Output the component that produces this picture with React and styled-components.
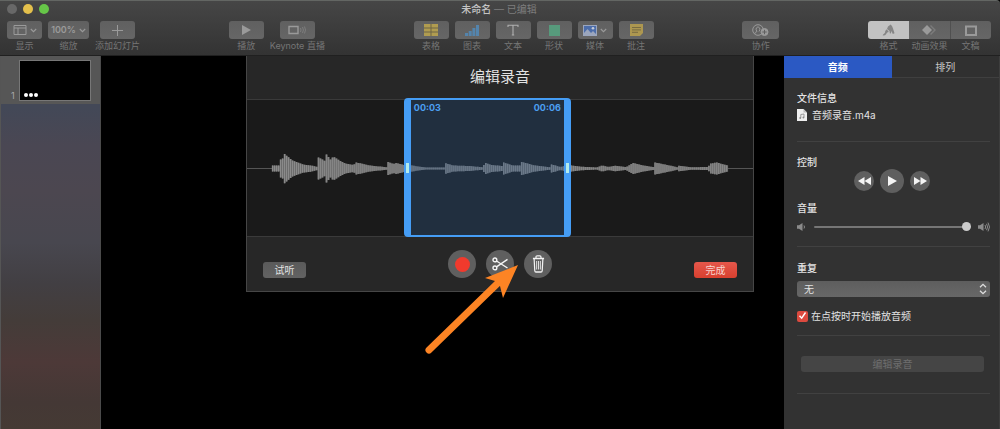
import React from "react";
import styled, { createGlobalStyle } from "styled-components";

const GlobalStyle = createGlobalStyle`
  * { box-sizing: border-box; }
  body {
    margin: 0;
    background: #000;
    color: #e2e2e2;
    font-family: Inter, "Noto Sans CJK SC", sans-serif;
    font-size: 10px;
    line-height: 14px;
  }
  button, select, input { font: inherit; color: inherit; margin: 0; }
  button { border: 0; padding: 0; background: none; }
`;

const Window = styled.div`
  position: relative;
  display: flex;
  flex-direction: column;
  min-height: 100vh;
  overflow: hidden;
`;

/* Title bar and toolbar */
const Header = styled.header`
  height: 56px;
  padding: 0 9px 0 7px;
  background: linear-gradient(#464646, #333);
  border-top: 1px solid #636663;
  border-bottom: 1px solid #202020;
  border-radius: 0 4px 0 0;
`;
const TitleBar = styled.div`
  display: grid;
  grid-template-columns: 1fr auto 1fr;
  align-items: center;
  height: 16px;
  margin-bottom: 4px;
`;
const Lights = styled.div`
  display: flex;
  gap: 6px;
`;
const Light = styled.button`
  width: 10px;
  height: 10px;
  border-radius: 50%;
  background: ${(p) => p.$color};
`;
const Title = styled.h1`
  margin: 0;
  font-size: 10px;
  font-weight: 400;
  color: #7e7e7e;
  b { font-weight: 500; color: #c4c4c4; }
`;
const Toolbar = styled.nav`
  display: flex;
  justify-content: space-between;
`;
const Group = styled.div`
  display: flex;
  gap: ${(p) => p.$gap ?? 6}px;
`;
const Tool = styled.button`
  display: flex;
  flex-direction: column;
  align-items: center;
  font-size: 9px;
  color: #757575;
  white-space: nowrap;
`;
const Face = styled.span`
  display: flex;
  align-items: center;
  justify-content: center;
  gap: 3px;
  width: ${(p) => p.$width ?? 35}px;
  height: 18px;
  border-radius: ${(p) => p.$radius ?? "3px"};
  background: ${(p) => (p.$active ? "#c2c2c2" : "linear-gradient(#606060, #666)")};
  border-left: ${(p) => (p.$split ? "1px solid #505050" : "0")};
  color: #9a9a9a;
  font-weight: 600;
`;

/* Body columns */
const Body = styled.div`
  flex: 1;
  display: flex;
`;
const Sidebar = styled.aside`
  width: 101px;
  border-left: 1px solid #555;
  border-right: 1px solid #4a4a4a;
  background: linear-gradient(
    #434857 14%, #4a4753 24%, #4c4750 36%, #48474f 50%,
    #423f43 61%, #443c39 71%, #4d3938 82%, #443835 93%, #453a34 100%
  );
`;
const SlideRow = styled.div`
  display: flex;
  align-items: flex-end;
  gap: 4px;
  height: 48px;
  padding: 4px 9px 3px 10px;
  background: #565656;
  font-size: 9px;
  line-height: 10px;
  color: #aaa;
`;
const Slide = styled.div`
  flex: 1;
  display: flex;
  align-items: flex-end;
  gap: 1px;
  height: 41px;
  padding: 3px 4px;
  background: #000;
  border: 1px solid #777;
`;
const Dot = styled.span`
  width: 4px;
  height: 4px;
  border-radius: 50%;
  background: #fff;
`;
const Canvas = styled.main`
  flex: 1;
  background: #000;
`;

/* Recording sheet, hanging from the toolbar over the canvas */
const Sheet = styled.section`
  position: absolute;
  top: 56px;
  left: 50%;
  transform: translateX(-50%);
  width: 50.8%;
  min-width: 480px;
  background: #272727;
  border: 1px solid #464646;
  border-top: 0;
`;
const SheetTitle = styled.h2`
  margin: 0;
  padding: 10px 0 11px;
  text-align: center;
  font-size: 15px;
  line-height: 22px;
  font-weight: 400;
`;
const Track = styled.div`
  position: relative;
  height: 138px;
  background: #1a1a1a;
  border: solid #3a3a3a;
  border-width: 1px 0;
`;
const WaveSvg = styled.svg`
  display: block;
  width: 100%;
  height: 136px;
`;
const Selection = styled.div`
  position: absolute;
  inset: -2px 36% -1px 31%;
  display: flex;
  justify-content: space-between;
  padding: 1px 3px;
  border: solid #459df5;
  border-width: 2px 7px;
  border-radius: 4px;
  background: rgba(48, 88, 136, 0.34);
  color: #4c9ff2;
  font-size: 9px;
  font-weight: 700;
  &::before, &::after {
    content: "";
    position: absolute;
    top: 63px;
    width: 3px;
    height: 10px;
    background: #b4ecec;
  }
  &::before { left: -5px; }
  &::after { right: -5px; }
`;
const SheetFooter = styled.footer`
  display: grid;
  grid-template-columns: 1fr auto 1fr;
  align-items: start;
  height: 54px;
  padding: 13px 16px 0;
`;
const PushButton = styled.button`
  justify-self: ${(p) => (p.$primary ? "end" : "start")};
  width: 43px;
  height: 16px;
  margin-top: 12px;
  border-radius: 3px;
  background: ${(p) => (p.$primary ? "linear-gradient(#e5574b, #d8402f)" : "linear-gradient(#5a5a5a, #626262)")};
  color: ${(p) => (p.$primary ? "#f7d5d0" : "#e2e2e2")};
`;
const RoundRow = styled.div`
  display: flex;
  align-items: center;
  justify-content: center;
  gap: ${(p) => p.$gap}px;
`;
const Transport = styled(RoundRow)`
  padding-right: 3px;
`;
const Round = styled.button`
  display: flex;
  align-items: center;
  justify-content: center;
  width: ${(p) => p.$size}px;
  height: ${(p) => p.$size}px;
  border-radius: 50%;
  background: #5f5f5f;
  color: #f4f4f4;
`;
const Pointer = styled.svg`
  position: absolute;
  top: 204px;
  left: 50%;
  margin-left: -80px;
  pointer-events: none;
`;

/* Inspector */
const Inspector = styled.aside`
  width: 216px;
  background: #323232;
  border-right: 1px solid #3d3d3d;
`;
const Tabs = styled.div`
  display: grid;
  grid-template-columns: 1fr 1fr;
`;
const Tab = styled.button`
  height: 22px;
  background: ${(p) => (p.$active ? "#2b59c3" : "#303030")};
  border-bottom: 1px solid ${(p) => (p.$active ? "#2b59c3" : "#3f3f3f")};
  font-weight: ${(p) => (p.$active ? 600 : 400)};
  color: ${(p) => (p.$active ? "#fff" : "#c8c8c8")};
`;
const Section = styled.section`
  display: flex;
  flex-direction: column;
  height: ${(p) => p.$height}px;
  margin: 0 9px 0 13px;
  padding-top: ${(p) => p.$top ?? 13}px;
  border-bottom: 1px solid #414141;
`;
const Heading = styled.h3`
  margin: 0;
  font-size: 10px;
  font-weight: 500;
`;
const Line = styled.div`
  display: flex;
  align-items: center;
  gap: 5px;
  margin-top: 3px;
`;
const FieldLabel = styled.label`
  font-weight: 500;
`;
const VolumeRow = styled.div`
  display: flex;
  align-items: center;
  gap: 7px;
  margin-top: 5px;
`;
const VolumeLabel = styled(FieldLabel)`
  margin-top: 8px;
`;
const Range = styled.input`
  appearance: none;
  flex: 1;
  min-width: 0;
  height: 14px;
  background: transparent;
  &::-webkit-slider-runnable-track {
    height: 2px;
    border-radius: 1px;
    background: #767676;
  }
  &::-webkit-slider-thumb {
    appearance: none;
    width: 9px;
    height: 9px;
    margin-top: -4px;
    border-radius: 50%;
    background: #cbcbcb;
  }
`;
const SelectBox = styled.div`
  position: relative;
  margin-top: 6px;
  svg { position: absolute; right: 3px; top: 2px; pointer-events: none; }
`;
const Select = styled.select`
  appearance: none;
  display: block;
  width: 100%;
  height: 16px;
  padding: 0 7px;
  border: 0;
  border-radius: 3px;
  background: linear-gradient(#5e5e5e, #676767);
`;
const CheckLabel = styled.label`
  position: relative;
  display: flex;
  align-items: center;
  gap: 3px;
  margin-top: 12px;
  svg { position: absolute; left: 0; top: 1px; pointer-events: none; }
`;
const Check = styled.input`
  appearance: none;
  width: 11px;
  height: 11px;
  border-radius: 2px;
  background: #dc4a3f;
`;
const WideButton = styled.button`
  height: 16px;
  margin: 0 6px 0 4px;
  border-radius: 3px;
  background: #454545;
  color: #6e6e6e;
`;

/* Icons */
const Chevron = () => (
  <svg width="7" height="5" viewBox="0 0 7 5" fill="none" stroke="currentColor" strokeWidth="1.1"><path d="M.8 1 3.5 3.7 6.2 1" /></svg>
);
const ViewIcon = () => (
  <svg width="14" height="12" viewBox="0 0 14 12" fill="none" stroke="currentColor"><path d="M1 1.5h12v9H1zM1 4h12M5 4v6.5" /></svg>
);
const PlusIcon = () => (
  <svg width="11" height="11" viewBox="0 0 11 11" stroke="currentColor"><path d="M5.5 0v11M0 5.5h11" /></svg>
);
const PlayIcon = () => (
  <svg width="10" height="10" viewBox="0 0 10 10" fill="currentColor"><path d="M1 0v10l9-5z" /></svg>
);
const LiveIcon = () => (
  <svg width="18" height="10" viewBox="0 0 18 10" fill="none" stroke="currentColor"><path d="M1 1.5h9v7H1z" strokeWidth="1.4" /><path d="M12.5 3q1 2 0 4M14.5 2q1.8 3 0 6M16.500 1.500q2 3.500 0 7" strokeWidth=".8" opacity=".6" /></svg>
);
const TableIcon = () => (
  <svg width="14" height="12" viewBox="0 0 14 12"><path fill="#b09c50" d="M0 0h14v12H0z" /><path stroke="#6c6547" d="M0 4h14M0 8h14M7 0v12" /></svg>
);
const ChartIcon = () => (
  <svg width="14" height="12" viewBox="0 0 14 12" fill="#5484ac"><path d="M0 9h3v3H0zM3.7 7h3v5h-3zM7.4 4h3v8h-3zM11 1h3v11h-3z" /></svg>
);
const TextIcon = () => (
  <svg width="12" height="12" viewBox="0 0 12 12" fill="none" stroke="#b0b0b0" strokeWidth="1.1"><path d="M1 3V1.2h10V3M6 1v10M4.800 11h2.400" /></svg>
);
const ShapeIcon = () => (
  <svg width="11" height="11" viewBox="0 0 11 11"><path fill="#579a7c" d="M0 0h11v11H0z" /></svg>
);
const MediaIcon = () => (
  <svg width="14" height="11" viewBox="0 0 14 11"><path fill="#9ba6bd" d="M0 0h14v11H0z" /><path fill="#4c6daa" d="M1 1h12v9H1z" /><path fill="#9ba6bd" d="m1 8 3.500-4L8 8l2-2 3 3v1H1z" /><circle cx="10" cy="3.300" r="1.300" fill="#c5cbd8" /></svg>
);
const NoteIcon = () => (
  <svg width="13" height="12" viewBox="0 0 13 12"><path fill="#ad9750" d="M0 0h13v9l-3 3H0z" /><path stroke="#776b42" d="M2 3.500h9M2 5.900h9M2 8.300h6" /></svg>
);
const CollabIcon = () => (
  <svg width="17" height="13" viewBox="0 0 17 13" fill="none" stroke="currentColor"><circle cx="6" cy="6" r="5.300" /><path d="M2.600 10q.4-2 2.400-2.500Q3.600 5.700 4.300 4 6 1.500 7.700 4q.6 1.900-.7 3.500" /><circle cx="12.500" cy="8" r="3.500" fill="currentColor" /><path d="M12.500 5.800v4.400M10.300 8h4.400" stroke="#606060" /></svg>
);
const BrushIcon = () => (
  <svg width="13" height="13" viewBox="0 0 13 13" fill="#858585"><path d="M6 2.500 8.700.5q1.700 1.500 2.300 4l1.500 4.700-1.700.8-1.300-3-.7 2.600-1-.3L7.500 7 5 5z" /><path d="M4.800 5.300 6.800 8Q4.800 8 4.200 10q-.9 1.800-3.500 1.600.1-1.300 1.400-1.900Q3.500 8.700 3.200 7z" /></svg>
);
const AnimateIcon = () => (
  <svg width="15" height="10" viewBox="0 0 15 10" fill="currentColor"><path d="m5 0 5 5-5 5-5-5z" /><path d="m9 0 5 5-5 5-1-1 4-4-4-4z" opacity=".45" /></svg>
);
const DocIcon = () => (
  <svg width="12" height="11" viewBox="0 0 12 11" fill="none" stroke="currentColor"><path d="M1 1.500h10v8.500H1z" strokeWidth="2" /></svg>
);
const ScissorsIcon = () => (
  <svg width="16" height="14" viewBox="0 0 16 14" fill="none" stroke="currentColor" strokeWidth="1.400"><circle cx="2.900" cy="2.900" r="1.900" /><circle cx="2.900" cy="10.900" r="1.900" /><path d="M4.500 4 15.500 11M4.500 9.800 15.500 2.400" /></svg>
);
const TrashIcon = () => (
  <svg width="13" height="18" viewBox="0 0 14 18" preserveAspectRatio="none" fill="none" stroke="currentColor"><path d="M1 3.500h12M4.300 3.200V2q0-1.200 1.200-1.200h3q1.200 0 1.200 1.200v1.200M2.300 4l.7 11.700q.1 1.300 1.300 1.300h5.400q1.200 0 1.300-1.300L11.700 4" strokeWidth="1.300" /><path d="M5 6v8.500M7 6v8.500M9 6v8.500" strokeWidth=".9" /></svg>
);
const SkipIcon = ({ back }) => (
  <svg width="13" height="8" viewBox="0 0 13 8" fill="currentColor"><path d={back ? "M6.500 0v8L0 4zM13 0v8L6.500 4z" : "M0 0v8l6.500-4zM6.500 0v8L13 4z"} /></svg>
);
const SpeakerIcon = ({ loud }) => (
  <svg width={loud ? 12 : 10} height="10" viewBox={loud ? "0 0 12 10" : "0 0 10 10"} fill="#8b8b8b"><path d="M0 3.300h2L5.500 1v8L2 6.700H0z" /><path d={loud ? "M7 3q1.300 2 0 4M8.500 1.800q2.200 3.200 0 6.400M10 .6q3 4.400 0 8.800" : "M7 3.500q1 1.500 0 3"} fill="none" stroke="#8b8b8b" /></svg>
);
const FileIcon = () => (
  <svg width="10" height="12" viewBox="0 0 10 12"><path fill="#eee" d="M0 0h6.500L10 3.500V12H0z" /><path fill="#bbb" d="M6.500 0v3.500H10z" /><path d="M3.800 9V5.500L7 5v3.500" fill="none" stroke="#888" strokeWidth=".8" /><circle cx="3.200" cy="9" r=".9" fill="#888" /><circle cx="6.400" cy="8.500" r=".9" fill="#888" /></svg>
);

/* Loudness envelope of the recording: [position, half height] */
const envelope = [
  [25, 0], [25, 3], [33, 3], [33, 9], [35, 10], [36, 15.5], [40, 12], [45, 8], [50, 6], [56, 4], [64, 3],
  [70, 1.5], [70, 11.5], [75, 9], [78, 7], [79, 14], [83, 9], [86, 12], [92, 8], [98, 5], [106, 3.5],
  [109, 6], [114, 5], [122, 3], [132, 2], [141, 1], [141, 6.5], [146, 4.5], [149, 5.5], [157, 3.5],
  [163, 3.5], [170, 2], [180, 1], [197, 1], [198, 5.5], [206, 3], [222, 2.5], [236, 1.2], [238, 6],
  [244, 3.5], [256, 2.5], [257, 6], [266, 3], [273, 3], [275, 6.5], [281, 5], [288, 3], [303, 1.2],
  [305, 4], [314, 1.5], [322, 3.5], [332, 2], [350, 1], [356, 3], [362, 1.5], [369, 2.8], [380, 1.5],
  [384, 4], [387, 5.5], [397, 3], [407, 1.5], [409, 6], [416, 4.5], [426, 2.5], [431, 1.2], [432, 3],
  [445, 1.2], [462, 1.5], [465, 5], [471, 6], [478, 4], [482, 3], [482, 0],
];
const levelAt = (x) => {
  for (let i = 1; i < envelope.length; i++) {
    const [x0, y0] = envelope[i - 1];
    const [x1, y1] = envelope[i];
    if (x >= x0 && x < x1) return y0 + ((y1 - y0) * (x - x0)) / (x1 - x0);
  }
  return 0;
};
const barPath = (width) =>
  Array.from({ length: 229 }, (_, i) => 25 + i * 2)
    .map((x) => {
      const h = levelAt(x);
      return `M${x} ${68.5 - h}h${width}v${2 * h}h${-width}z`;
    })
    .join("");

const Waveform = () => (
  <WaveSvg viewBox="0 0 508 136" preserveAspectRatio="none" role="img" aria-label="录音波形">
    <path d="M0 68.500h508" stroke="#555" />
    <path d={barPath(2)} fill="#666" />
    <path d={barPath(1.2)} fill="#8a8a8a" />
  </WaveSvg>
);

const ToolButton = ({ label, children, ...face }) => (
  <Tool type="button">
    <Face {...face}>{children}</Face>
    {label}
  </Tool>
);

export default function App() {
  return (
    <Window>
      <GlobalStyle />
      <Header>
        <TitleBar>
          <Lights>
            <Light $color="#686868" aria-label="关闭" />
            <Light $color="#e4c04c" aria-label="最小化" />
            <Light $color="#66c648" aria-label="全屏" />
          </Lights>
          <Title><b>未命名</b> — 已编辑</Title>
        </TitleBar>
        <Toolbar>
          <Group>
            <ToolButton label="显示"><ViewIcon /><Chevron /></ToolButton>
            <ToolButton label="缩放" $width={41}>100%<Chevron /></ToolButton>
            <ToolButton label="添加幻灯片"><PlusIcon /></ToolButton>
          </Group>
          <Group>
            <ToolButton label="播放"><PlayIcon /></ToolButton>
            <ToolButton label="Keynote 直播"><LiveIcon /></ToolButton>
          </Group>
          <Group>
            <ToolButton label="表格"><TableIcon /></ToolButton>
            <ToolButton label="图表"><ChartIcon /></ToolButton>
            <ToolButton label="文本"><TextIcon /></ToolButton>
            <ToolButton label="形状"><ShapeIcon /></ToolButton>
            <ToolButton label="媒体"><MediaIcon /><Chevron /></ToolButton>
            <ToolButton label="批注"><NoteIcon /></ToolButton>
          </Group>
          <Group>
            <ToolButton label="协作" $width={37}><CollabIcon /></ToolButton>
          </Group>
          <Group $gap={0}>
            <ToolButton label="格式" $width={41} $radius="3px 0 0 3px" $active><BrushIcon /></ToolButton>
            <ToolButton label="动画效果" $width={41} $radius="0"><AnimateIcon /></ToolButton>
            <ToolButton label="文稿" $width={41} $radius="0 3px 3px 0" $split><DocIcon /></ToolButton>
          </Group>
        </Toolbar>
      </Header>

      <Body>
        <Sidebar>
          <SlideRow>
            1
            <Slide><Dot /><Dot /><Dot /></Slide>
          </SlideRow>
        </Sidebar>
        <Canvas />
        <Inspector>
          <Tabs>
            <Tab type="button" $active>音频</Tab>
            <Tab type="button">排列</Tab>
          </Tabs>
          <Section $height={64}>
            <Heading>文件信息</Heading>
            <Line><FileIcon />音频录音.m4a</Line>
          </Section>
          <Section $height={105}>
            <Heading>控制</Heading>
            <Transport $gap={6}>
              <Round type="button" $size={20} aria-label="后退"><SkipIcon back /></Round>
              <Round type="button" $size={24} aria-label="播放"><PlayIcon /></Round>
              <Round type="button" $size={20} aria-label="前进"><SkipIcon /></Round>
            </Transport>
            <VolumeLabel htmlFor="volume">音量</VolumeLabel>
            <VolumeRow>
              <SpeakerIcon />
              <Range id="volume" type="range" min="0" max="100" defaultValue="100" />
              <SpeakerIcon loud />
            </VolumeRow>
          </Section>
          <Section $height={89} $top={14}>
            <FieldLabel htmlFor="repeat">重复</FieldLabel>
            <SelectBox>
              <Select id="repeat" defaultValue="无"><option>无</option></Select>
              <svg width="8" height="12" viewBox="0 0 8 12" fill="none" stroke="#ddd" strokeWidth="1.300"><path d="m1 4.300 3-3 3 3M1 7.700l3 3 3-3" /></svg>
            </SelectBox>
            <CheckLabel>
              <Check type="checkbox" defaultChecked />
              <svg width="11" height="11" viewBox="0 0 11 11" fill="none" stroke="#fff" strokeWidth="1.400"><path d="m2.500 5.700 2.200 2.500 3.800-5.700" /></svg>
              在点按时开始播放音频
            </CheckLabel>
          </Section>
          <Section $height={58} $top={20}>
            <WideButton type="button" disabled>编辑录音</WideButton>
          </Section>
        </Inspector>
      </Body>

      <Sheet role="dialog" aria-label="编辑录音">
        <SheetTitle>编辑录音</SheetTitle>
        <Track>
          <Waveform />
          <Selection><span>00:03</span><span>00:06</span></Selection>
        </Track>
        <SheetFooter>
          <PushButton type="button">试听</PushButton>
          <RoundRow $gap={10}>
            <Round type="button" $size={28} aria-label="录音">
              <svg width="15" height="15" viewBox="0 0 15 15"><circle cx="7.500" cy="7.500" r="7.500" fill="#f13a2d" /></svg>
            </Round>
            <Round type="button" $size={28} aria-label="修剪"><ScissorsIcon /></Round>
            <Round type="button" $size={28} aria-label="删除"><TrashIcon /></Round>
          </RoundRow>
          <PushButton type="button" $primary>完成</PushButton>
        </SheetFooter>
        <Pointer width="104" height="98" viewBox="0 0 104 98">
          <path d="M9 90 80 21" stroke="#fd8424" strokeWidth="7" strokeLinecap="round" />
          <path d="M98 5 65 18l10 3 5 5 3 12z" fill="#fd8424" />
        </Pointer>
      </Sheet>
    </Window>
  );
}
